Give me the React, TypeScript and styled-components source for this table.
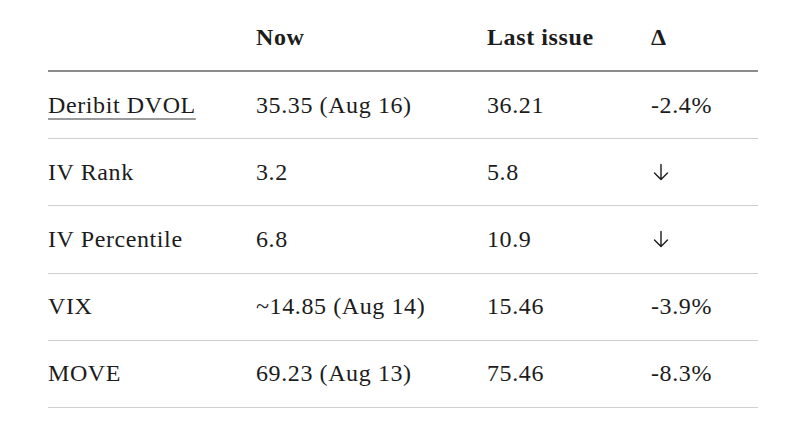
import React from 'react';
import styled, { createGlobalStyle } from 'styled-components';

const GlobalStyle = createGlobalStyle`
  html, body {
    margin: 0;
    padding: 0;
    background: #ffffff;
  }
  body {
    font-family: 'Liberation Serif', 'DejaVu Serif', serif;
    color: #1c1c1c;
  }
`;

const Table = styled('div')`
  margin: 0 34px 0 48px;
  padding-top: 5px;
  font-size: 24px;
  letter-spacing: 0.6px;
`;

const Row = styled('div')<{ $head?: boolean }>`
  display: grid;
  grid-template-columns: 208px 231px 164px 1fr;
  align-items: center;
  height: ${(p) => (p.$head ? '65px' : '66.2px')};
  border-bottom: ${(p) => (p.$head ? '2px solid #8c8c8c' : '1px solid #cfcfcf')};
  font-weight: ${(p) => (p.$head ? 700 : 400)};
`;

const Cell = styled('div')`
  white-space: nowrap;
  display: flex;
  align-items: center;
`;

const Link = styled('a')`
  color: inherit;
  text-decoration: underline;
  text-decoration-color: #9a9a9a;
  text-decoration-thickness: 2px;
  text-underline-offset: 5px;
`;

const Arrow = styled('svg')`
  width: 18px;
  height: 18px;
  margin-left: 1px;
`;

function DownArrow() {
  return (
    <Arrow viewBox="0 0 18 18" fill="none" stroke="#1c1c1c" strokeWidth={1.4} strokeLinecap="round">
      <path d="M9 1.5v15M2.5 10l6.5 6.5L15.5 10" />
    </Arrow>
  );
}

type Metric = {
  name: React.ReactNode;
  now: string;
  last: string;
  delta: React.ReactNode;
};

const metrics: Metric[] = [
  { name: <Link href="#">Deribit DVOL</Link>, now: '35.35 (Aug 16)', last: '36.21', delta: '-2.4%' },
  { name: 'IV Rank', now: '3.2', last: '5.8', delta: <DownArrow /> },
  { name: 'IV Percentile', now: '6.8', last: '10.9', delta: <DownArrow /> },
  { name: 'VIX', now: '~14.85 (Aug 14)', last: '15.46', delta: '-3.9%' },
  { name: 'MOVE', now: '69.23 (Aug 13)', last: '75.46', delta: '-8.3%' },
];

export default function App() {
  return (
    <>
      <GlobalStyle />
      <Table>
        <Row $head>
          <Cell />
          <Cell>Now</Cell>
          <Cell>Last issue</Cell>
          <Cell>Δ</Cell>
        </Row>
        {metrics.map((m, i) => (
          <Row key={i}>
            <Cell>{m.name}</Cell>
            <Cell>{m.now}</Cell>
            <Cell>{m.last}</Cell>
            <Cell>{m.delta}</Cell>
          </Row>
        ))}
      </Table>
    </>
  );
}
